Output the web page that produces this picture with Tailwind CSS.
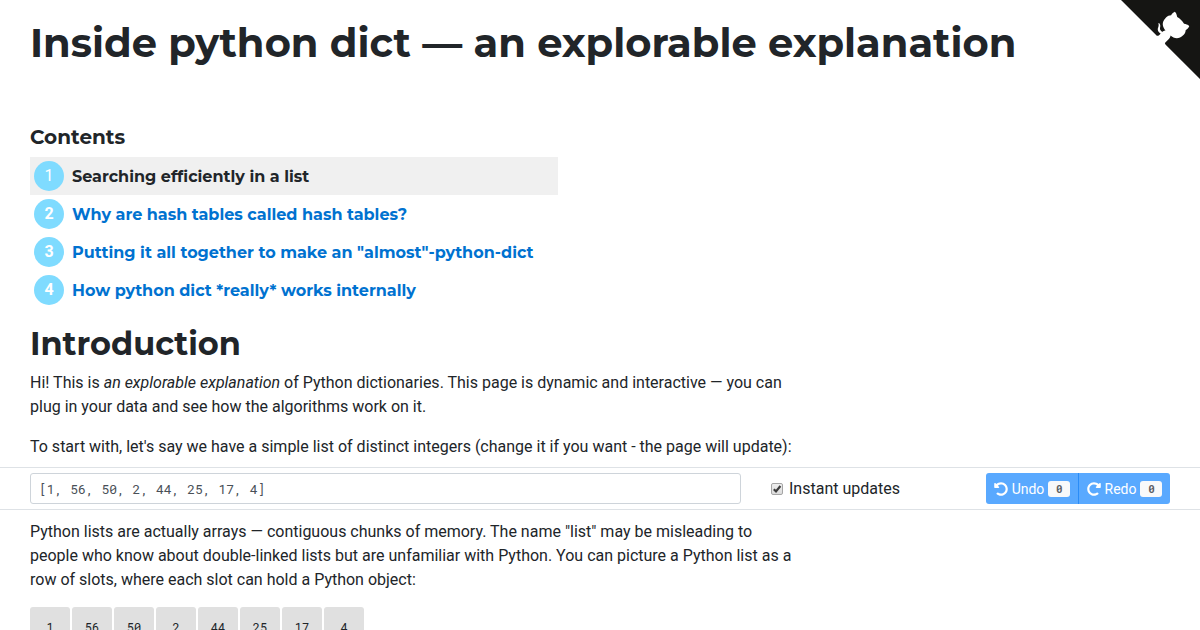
<!DOCTYPE html>
<html lang="en">
<head>
<meta charset="utf-8">
<meta name="viewport" content="width=device-width, initial-scale=1">
<title>Inside python dict — an explorable explanation</title>
<script src="https://cdn.jsdelivr.net/npm/@tailwindcss/browser@4"></script>
</head>
<body class="relative bg-white font-['Roboto',sans-serif] text-base text-[#212529] overflow-x-hidden">
<a href="#github" aria-label="View source on GitHub" class="absolute right-0 -top-px">
  <svg width="80" height="80" viewBox="0 0 250 250" class="fill-[#151513] text-white" aria-hidden="true">
    <path d="M0,0 L115,115 L130,115 L142,142 L250,250 L250,0 Z"/>
    <path fill="#fff" d="M128.3,109.0 C113.8,99.7 119.0,89.6 119.0,89.6 C122.0,82.7 120.5,78.6 120.5,78.6 C119.2,72.0 123.4,76.3 123.4,76.3 C127.3,80.9 125.5,87.3 125.5,87.3 C122.9,97.6 130.6,101.9 134.4,103.2"/>
    <path fill="#fff" d="M115.0,115.0 C114.9,115.1 118.7,116.5 119.8,115.4 L133.7,101.6 C136.9,99.2 139.9,98.4 142.2,98.6 C133.8,88.0 127.5,74.4 143.8,58.0 C148.5,53.4 154.0,51.2 159.7,51.0 C160.3,49.4 163.2,43.6 171.4,40.1 C171.4,40.1 176.1,42.5 178.8,56.2 C183.1,58.6 187.2,61.8 190.9,65.4 C194.5,69.0 197.7,73.2 200.1,77.6 C213.8,80.2 216.3,84.9 216.3,84.9 C212.7,93.1 206.9,96.0 205.4,96.6 C205.1,102.4 203.0,107.8 198.3,112.5 C181.9,128.9 168.3,122.5 157.7,114.1 C157.9,116.9 156.7,120.9 152.7,124.9 L141.0,136.5 C139.8,137.7 141.6,141.9 141.8,141.8 Z"/>
  </svg>
</a>
<main>
  <div class="px-[30px] pt-[19px]">
    <h1 class="font-['Montserrat','Inter',sans-serif] text-[40px] leading-12 font-bold">Inside python dict — an explorable explanation</h1>
    <nav aria-labelledby="contents" class="mt-[58px] w-fit">
      <h2 id="contents" class="font-['Montserrat','Inter',sans-serif] text-xl leading-6 font-bold">Contents</h2>
      <ol class="mt-2 font-['Montserrat','Inter',sans-serif] text-base leading-6 font-bold text-[#0072d0]">
        <li><a href="#chapter1" class="flex h-[38px] items-center gap-2 bg-[#f0f0f0] pl-1 pr-6 text-[#212529]"><span class="flex size-[30px] items-center justify-center rounded-full bg-[#7fdbff] font-['Roboto',sans-serif] text-base font-normal text-white">1</span><span class="pt-0.5">Searching efficiently in a list</span></a></li>
        <li><a href="#chapter2" class="flex h-[38px] items-center gap-2 pl-1 pr-6"><span class="flex size-[30px] items-center justify-center rounded-full bg-[#7fdbff] font-['Roboto',sans-serif] text-base font-bold text-white">2</span><span class="pt-0.5">Why are hash tables called hash tables?</span></a></li>
        <li><a href="#chapter3" class="flex h-[38px] items-center gap-2 pl-1 pr-6"><span class="flex size-[30px] items-center justify-center rounded-full bg-[#7fdbff] font-['Roboto',sans-serif] text-base font-bold text-white">3</span><span class="pt-0.5">Putting it all together to make an "almost"-python-dict</span></a></li>
        <li><a href="#chapter4" class="flex h-[38px] items-center gap-2 pl-1 pr-6"><span class="flex size-[30px] items-center justify-center rounded-full bg-[#7fdbff] font-['Roboto',sans-serif] text-base font-bold text-white">4</span><span class="pt-0.5">How python dict *really* works internally</span></a></li>
      </ol>
    </nav>
    <h2 class="mt-[15px] font-['Montserrat','Inter',sans-serif] text-[32px] leading-10 font-bold">Introduction</h2>
    <div class="mt-[7px] max-w-[770px]">
      <p>Hi! This is <em>an explorable explanation</em> of Python dictionaries. This page is dynamic and interactive — you can plug in your data and see how the algorithms work on it.</p>
      <p class="mt-4">To start with, let's say we have a simple list of distinct integers (change it if you want - the page will update):</p>
    </div>
  </div>
  <form class="mt-2 flex items-center border-y border-[#dee2e6] px-[30px] py-[5px]">
    <input type="text" aria-label="List of integers" value="[1, 56, 50, 2, 44, 25, 17, 4]" class="h-[31px] min-w-0 flex-1 rounded-[3px] border border-[#ced4da] px-2 font-['Roboto_Mono','DejaVu_Sans_Mono',monospace] text-[13px] text-[#495057]">
    <div class="ml-[30px] flex w-[215px] items-center gap-1.5">
      <span class="grid size-3 place-items-center">
        <input id="instant" type="checkbox" checked class="col-start-1 row-start-1 size-3 appearance-none rounded-[2px] border border-[#a5a5a5] bg-linear-to-b from-[#eeeeee] to-[#dcdcdc]">
        <svg viewBox="0 0 12 12" class="pointer-events-none col-start-1 row-start-1 size-3" aria-hidden="true"><path d="M2.8 6.2 5 8.4 9.4 3" fill="none" stroke="#3c3c3c" stroke-width="2.2"/></svg>
      </span>
      <label for="instant">Instant updates</label>
    </div>
    <div class="flex text-sm text-white">
      <button type="button" class="flex h-[31px] w-[92px] items-center justify-center gap-1 rounded-l-[3px] bg-[#59a9ff]">
        <svg viewBox="0 0 512 512" class="size-3.5" fill="currentColor" aria-hidden="true"><path d="M255.545 8c-66.269.119-126.438 26.233-170.86 68.685L48.971 40.971C33.851 25.851 8 36.559 8 57.941V192c0 13.255 10.745 24 24 24h134.059c21.382 0 32.09-25.851 16.971-40.971l-41.75-41.75c30.864-28.899 70.801-44.907 113.23-45.273 92.398-.798 170.283 73.977 169.484 169.442C423.236 348.009 349.816 424 256 424c-41.127 0-79.997-14.678-110.63-41.556-4.743-4.161-11.906-3.908-16.368.553L89.34 422.659c-4.872 4.872-4.631 12.815.482 17.433C133.798 479.813 192.074 504 256 504c136.966 0 247.999-111.033 248-247.998C504.001 119.193 392.354 7.755 255.545 8z"/></svg>
        Undo
        <span class="flex h-4 w-[22px] items-center justify-center rounded-[3px] bg-[#f8f9fa] font-['Roboto_Mono','DejaVu_Sans_Mono',monospace] text-[11px] font-bold text-[#5c6065]">0</span>
      </button>
      <button type="button" class="flex h-[31px] w-[92px] items-center justify-center gap-1 rounded-r-[3px] border-l border-[#2a8cf7] bg-[#59a9ff]">
        <svg viewBox="0 0 512 512" class="size-3.5 -scale-x-100" fill="currentColor" aria-hidden="true"><path d="M255.545 8c-66.269.119-126.438 26.233-170.86 68.685L48.971 40.971C33.851 25.851 8 36.559 8 57.941V192c0 13.255 10.745 24 24 24h134.059c21.382 0 32.09-25.851 16.971-40.971l-41.75-41.75c30.864-28.899 70.801-44.907 113.23-45.273 92.398-.798 170.283 73.977 169.484 169.442C423.236 348.009 349.816 424 256 424c-41.127 0-79.997-14.678-110.63-41.556-4.743-4.161-11.906-3.908-16.368.553L89.34 422.659c-4.872 4.872-4.631 12.815.482 17.433C133.798 479.813 192.074 504 256 504c136.966 0 247.999-111.033 248-247.998C504.001 119.193 392.354 7.755 255.545 8z"/></svg>
        Redo
        <span class="flex h-4 w-[22px] items-center justify-center rounded-[3px] bg-[#f8f9fa] font-['Roboto_Mono','DejaVu_Sans_Mono',monospace] text-[11px] font-bold text-[#5c6065]">0</span>
      </button>
    </div>
  </form>
  <div class="px-[30px] pt-[10px]">
    <p class="max-w-[770px]">Python lists are actually arrays — contiguous chunks of memory. The name "list" may be misleading to people who know about double-linked lists but are unfamiliar with Python. You can picture a Python list as a row of slots, where each slot can hold a Python object:</p>
    <div class="mt-[15px] flex gap-0.5 font-['Roboto_Mono','DejaVu_Sans_Mono',monospace] text-xs">
      <div class="flex size-10 items-center justify-center rounded-[3px] bg-[#e0e0e0]">1</div>
      <div class="flex size-10 items-center justify-center rounded-[3px] bg-[#e0e0e0]">56</div>
      <div class="flex size-10 items-center justify-center rounded-[3px] bg-[#e0e0e0]">50</div>
      <div class="flex size-10 items-center justify-center rounded-[3px] bg-[#e0e0e0]">2</div>
      <div class="flex size-10 items-center justify-center rounded-[3px] bg-[#e0e0e0]">44</div>
      <div class="flex size-10 items-center justify-center rounded-[3px] bg-[#e0e0e0]">25</div>
      <div class="flex size-10 items-center justify-center rounded-[3px] bg-[#e0e0e0]">17</div>
      <div class="flex size-10 items-center justify-center rounded-[3px] bg-[#e0e0e0]">4</div>
    </div>
  </div>
</main>
</body>
</html>
